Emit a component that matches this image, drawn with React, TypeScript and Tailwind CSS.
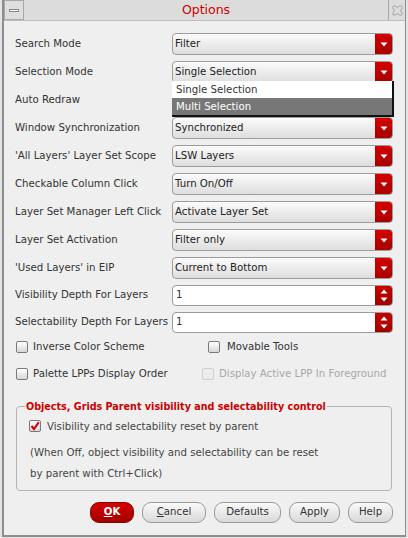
import React from "react";

const font = { fontFamily: '"DejaVu Sans", "Liberation Sans", sans-serif' };

function Arrow() {
  return (
    <svg width="8" height="5" viewBox="0 0 8 5">
      <path d="M0.5 0.5 L7.5 0.5 L4 4.5 Z" fill="#fff" />
    </svg>
  );
}

function Select({ value }: { value: string }) {
  return (
    <div className="flex h-[22px] w-[221px] rounded-[4px] border border-[#9c9c9c] bg-gradient-to-b from-[#fbfbfb] to-[#dedede] overflow-hidden">
      <div className="flex-1 flex items-center pl-[2px] text-[#222]">{value}</div>
      <div className="w-[17px] flex items-center justify-center bg-gradient-to-b from-[#d40000] to-[#a80000]">
        <Arrow />
      </div>
    </div>
  );
}

function Spin({ value }: { value: string }) {
  return (
    <div className="flex h-[21px] w-[221px] rounded-[4px] border border-[#9c9c9c] bg-white overflow-hidden">
      <div className="flex-1 flex items-center pl-[3px] text-[#333]">{value}</div>
      <div className="w-[17px] flex flex-col items-center justify-center gap-[3px] bg-gradient-to-b from-[#c80000] to-[#a00000]">
        <svg width="8" height="5" viewBox="0 0 8 5">
          <path d="M0.5 4.5 L7.5 4.5 L4 0.5 Z" fill="#fff" />
        </svg>
        <svg width="8" height="5" viewBox="0 0 8 5">
          <path d="M0.5 0.5 L7.5 0.5 L4 4.5 Z" fill="#fff" />
        </svg>
      </div>
    </div>
  );
}

function Box({ checked, disabled }: { checked?: boolean; disabled?: boolean }) {
  return (
    <div
      className={
        "w-[12px] h-[12px] rounded-[2px] border flex items-center justify-center " +
        (disabled
          ? "border-[#cfcfcf] bg-[#ececec]"
          : "border-[#7a7a7a] bg-gradient-to-b from-[#ffffff] to-[#d6d6d6]")
      }
    >
      {checked && (
        <svg width="10" height="10" viewBox="0 0 10 10">
          <path d="M1.5 5 L4 8 L8.8 1.2" stroke="#cc0000" strokeWidth="2" fill="none" />
        </svg>
      )}
    </div>
  );
}

const rows: [string, string][] = [
  ["Search Mode", "Filter"],
  ["Selection Mode", "Single Selection"],
  ["Auto Redraw", ""],
  ["Window Synchronization", "Synchronized"],
  ["'All Layers' Layer Set Scope", "LSW Layers"],
  ["Checkable Column Click", "Turn On/Off"],
  ["Layer Set Manager Left Click", "Activate Layer Set"],
  ["Layer Set Activation", "Filter only"],
  ["'Used Layers' in EIP", "Current to Bottom"],
];

function Btn({ children, w, red }: { children: React.ReactNode; w: string; red?: boolean }) {
  return (
    <div
      className={
        "h-[21px] rounded-[9px] border flex items-center justify-center " +
        w +
        (red
          ? " border-[#8a0000] bg-gradient-to-b from-[#d80000] to-[#a00000] text-white font-bold"
          : " border-[#9a9a9a] bg-gradient-to-b from-[#fafafa] to-[#d9d9d9] text-[#333]")
      }
    >
      {children}
    </div>
  );
}

export default function App() {
  return (
    <div className="w-[408px] h-[538px] bg-[#e4e4e4] text-[10.2px]" style={font}>
      <div className="relative ml-[2px] w-[404px] h-[537px] border-l-2 border-r border-b-2 border-[#8d8d8d] bg-[#efefef] flex flex-col">
        <div className="h-[21px] flex bg-[#dcdcdc] border-b border-[#bdbdbd]">
          <div className="w-[20px] h-[20px] border border-[#a8a8a8] flex items-center justify-center bg-[#dedede]">
            <div className="w-[10px] h-[3px] border border-[#888] bg-white" />
          </div>
          <div className="flex-1 flex items-center justify-center text-[12.5px] text-[#cc0000]">Options</div>
          <div className="w-[17px] h-[20px] border-l border-[#a8a8a8] flex items-center justify-center">
            <svg width="11" height="11" viewBox="0 0 11 11">
              <path d="M1 1 L4 1 L5.5 3 L7 1 L10 1 L10 4 L8 5.5 L10 7 L10 10 L7 10 L5.5 8 L4 10 L1 10 L1 7 L3 5.5 L1 4 Z" fill="none" stroke="#aaa" />
            </svg>
          </div>
        </div>

        <div className="flex flex-col gap-[6px] pt-[12px] pl-[11px]">
          {rows.map(([l, v]) => (
            <div key={l} className="flex items-center h-[22px]">
              <div className="w-[157px] text-[#333]">{l}</div>
              <Select value={v} />
            </div>
          ))}
        </div>
        <div className="flex flex-col gap-[5px] pt-[5px] pl-[11px]">
          <div className="flex items-center h-[22px]">
            <div className="w-[157px] text-[#333]">Visibility Depth For Layers</div>
            <Spin value="1" />
          </div>
          <div className="flex items-center h-[22px]">
            <div className="w-[157px] text-[#333] whitespace-nowrap">Selectability Depth For Layers</div>
            <Spin value="1" />
          </div>
        </div>

        <div className="grid grid-cols-[186px_1fr] gap-y-[12px] pt-[6px] pl-[12px] text-[#333]">
          <div className="flex items-center gap-[5px]">
            <Box />
            <span>Inverse Color Scheme</span>
          </div>
          <div className="flex items-center gap-[7px] pl-[6px]">
            <Box />
            <span>Movable Tools</span>
          </div>
          <div className="flex items-center gap-[5px]">
            <Box />
            <span>Palette LPPs Display Order</span>
          </div>
          <div className="flex items-center gap-[5px]">
            <Box disabled />
            <span className="text-[#a8a8a8]">Display Active LPP In Foreground</span>
          </div>
        </div>

        <div className="relative mt-[24px] ml-[12px] w-[376px] h-[85px] border border-[#b4b4b4] rounded-[4px]">
          <div className="absolute -top-[8px] left-[8px] px-[1px] bg-[#efefef] text-[#cc0000] font-bold text-[9.6px] leading-[15px]">
            Objects, Grids Parent visibility and selectability control
          </div>
          <div className="flex flex-col pl-[12px] pt-[12px] text-[#444]">
            <div className="flex items-center gap-[6px]">
              <Box checked />
              <span>Visibility and selectability reset by parent</span>
            </div>
            <div className="pl-[1px] pt-[11px]">(When Off, object visibility and selectability can be reset</div>
            <div className="pl-[1px] pt-[6px]">by parent with Ctrl+Click)</div>
          </div>
        </div>

        <div className="flex justify-end gap-[8px] pr-[12px] mt-[11px]">
          <Btn w="w-[44px]" red>
            <span className="underline">O</span>K
          </Btn>
          <Btn w="w-[64px]">
            <span className="underline">C</span>ancel
          </Btn>
          <Btn w="w-[67px]">Defaults</Btn>
          <Btn w="w-[51px]">Apply</Btn>
          <Btn w="w-[45px]">Help</Btn>
        </div>

        <div className="absolute left-[168px] top-[81px] w-[222px] h-[36px] bg-white border-r-2 border-b-2 border-[#111] text-[#333]">
          <div className="h-[17px] flex items-center pl-[4px]">Single Selection</div>
          <div className="h-[17px] flex items-center pl-[4px] bg-[#777] text-white">Multi Selection</div>
        </div>
      </div>
    </div>
  );
}
